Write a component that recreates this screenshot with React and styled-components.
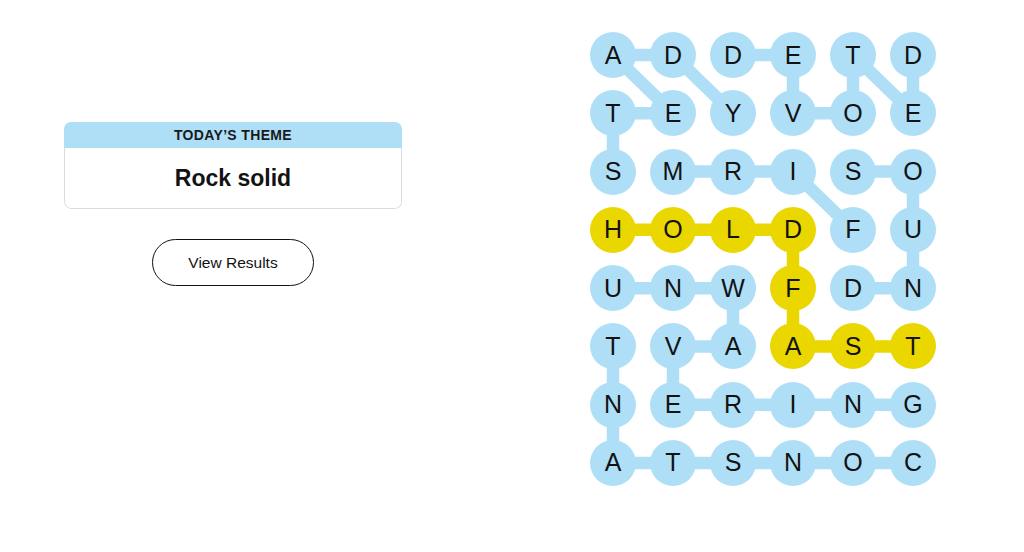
import React from "react";
import styled, { createGlobalStyle } from "styled-components";

const Global = createGlobalStyle`
  html, body { margin: 0; padding: 0; background: #fff; }
  body { font-family: "Liberation Sans", Arial, sans-serif; color: #121212; }
`;

const BLUE = "#aedff7";
const YELLOW = "#ebd700";
const CELL = 46;
const COL_GAP = 14;
const ROW_GAP = 12.29;

const GRID = [
  "ADDETD",
  "TEYVOE",
  "SMRISO",
  "HOLDFU",
  "UNWFDN",
  "TVAAST",
  "NERING",
  "ATSNOC",
];

const SPAN = new Set(["3,0", "3,1", "3,2", "3,3", "4,3", "5,3", "5,4", "5,5"]);

const LINKS = [
  [[0, 0], [0, 1]],
  [[0, 0], [1, 1]],
  [[0, 1], [1, 2]],
  [[0, 2], [0, 3]],
  [[0, 3], [1, 3]],
  [[1, 3], [1, 4]],
  [[0, 4], [1, 4]],
  [[0, 4], [1, 5]],
  [[0, 5], [1, 5]],
  [[1, 0], [1, 1]],
  [[1, 0], [2, 0]],
  [[2, 1], [2, 2]],
  [[2, 2], [2, 3]],
  [[2, 3], [3, 4]],
  [[2, 4], [2, 5]],
  [[2, 5], [3, 5]],
  [[3, 5], [4, 5]],
  [[4, 0], [4, 1]],
  [[4, 1], [4, 2]],
  [[4, 2], [5, 2]],
  [[4, 4], [4, 5]],
  [[5, 1], [5, 2]],
  [[5, 0], [6, 0]],
  [[5, 1], [6, 1]],
  [[6, 1], [6, 2]],
  [[6, 2], [6, 3]],
  [[6, 3], [6, 4]],
  [[6, 4], [6, 5]],
  [[6, 0], [7, 0]],
  [[7, 0], [7, 1]],
  [[7, 1], [7, 2]],
  [[7, 2], [7, 3]],
  [[7, 3], [7, 4]],
  [[7, 4], [7, 5]],
  [[3, 0], [3, 1]],
  [[3, 1], [3, 2]],
  [[3, 2], [3, 3]],
  [[3, 3], [4, 3]],
  [[4, 3], [5, 3]],
  [[5, 3], [5, 4]],
  [[5, 4], [5, 5]],
];

const Page = styled.main`
  display: flex;
  align-items: flex-start;
  padding: 32px 0 0 64px;
  gap: 188px;
`;

const LeftColumn = styled.section`
  width: 338px;
  display: flex;
  flex-direction: column;
  align-items: center;
  padding-top: 90px;
  gap: 30px;
`;

const ThemeCard = styled.div`
  width: 100%;
  border-radius: 7px;
  overflow: hidden;
  display: flex;
  flex-direction: column;
  align-items: stretch;
`;

const ThemeHeader = styled.div`
  background: ${BLUE};
  height: 26px;
  display: flex;
  align-items: center;
  justify-content: center;
  font-size: 14px;
  font-weight: 700;
  letter-spacing: 0.35px;
  color: #1a1a1a;
`;

const ThemeTitle = styled.div`
  height: 61px;
  display: flex;
  align-items: center;
  justify-content: center;
  font-size: 23px;
  font-weight: 700;
  color: #121212;
  border: 1px solid #dcdcdc;
  border-top: none;
  border-radius: 0 0 7px 7px;
  box-sizing: border-box;
`;

const ResultsButton = styled.button`
  width: 162px;
  height: 47px;
  border: 1px solid #121212;
  border-radius: 24px;
  background: #fff;
  font-family: "Liberation Sans", Arial, sans-serif;
  font-size: 15.5px;
  color: #121212;
  padding: 0;
  cursor: pointer;
`;

const Board = styled.div`
  position: relative;
  width: ${6 * CELL + 5 * COL_GAP}px;
`;

const Connectors = styled.svg`
  position: absolute;
  inset: 0;
  width: 100%;
  height: 100%;
  overflow: visible;
`;

const LetterGrid = styled.div`
  position: relative;
  display: grid;
  grid-template-columns: repeat(6, ${CELL}px);
  grid-auto-rows: ${CELL}px;
  column-gap: ${COL_GAP}px;
  row-gap: ${ROW_GAP}px;
`;

const Letter = styled.div`
  width: ${CELL}px;
  height: ${CELL}px;
  border-radius: 50%;
  background: ${(p) => (p.$span ? YELLOW : BLUE)};
  display: flex;
  align-items: center;
  justify-content: center;
  font-size: 25px;
  font-weight: 400;
  color: #121212;
`;

const center = ([r, c]) => [
  c * (CELL + COL_GAP) + CELL / 2,
  r * (CELL + ROW_GAP) + CELL / 2,
];

export default function App() {
  return (
    <>
      <Global />
      <Page>
        <LeftColumn>
          <ThemeCard>
            <ThemeHeader>TODAY’S THEME</ThemeHeader>
            <ThemeTitle>Rock solid</ThemeTitle>
          </ThemeCard>
          <ResultsButton>View Results</ResultsButton>
        </LeftColumn>
        <Board>
          <Connectors>
            {LINKS.map(([a, b], i) => {
              const [x1, y1] = center(a);
              const [x2, y2] = center(b);
              const span = SPAN.has(a.join(",")) && SPAN.has(b.join(","));
              return (
                <line
                  key={i}
                  x1={x1}
                  y1={y1}
                  x2={x2}
                  y2={y2}
                  stroke={span ? YELLOW : BLUE}
                  strokeWidth={12.5}
                />
              );
            })}
          </Connectors>
          <LetterGrid>
            {GRID.map((row, r) =>
              row.split("").map((ch, c) => (
                <Letter key={`${r}-${c}`} $span={SPAN.has(`${r},${c}`)}>
                  {ch}
                </Letter>
              ))
            )}
          </LetterGrid>
        </Board>
      </Page>
    </>
  );
}
